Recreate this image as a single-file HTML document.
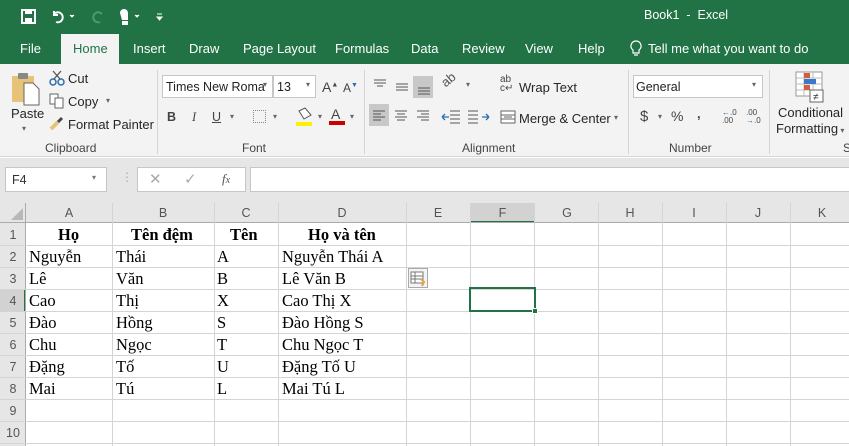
<!DOCTYPE html>
<html><head><meta charset="utf-8"><style>
*{margin:0;padding:0;box-sizing:border-box}
body{width:849px;height:446px;overflow:hidden;background:#fff;font-family:"Liberation Sans",sans-serif;position:relative}
.a{position:absolute;white-space:nowrap}
.ui{font-size:13px;color:#262626}
.tab{color:#fff;font-size:13px;top:41px}
.grp{font-size:12px;color:#444;top:141px}
.sep{position:absolute;width:1px;background:#d4d4d4;top:70px;height:84px}
.vl{position:absolute;top:203px;width:1px;height:243px;background:#d4d4d4}
.hl{position:absolute;left:0;width:849px;height:1px;background:#d4d4d4}
.ch{position:absolute;top:203px;height:20px;font-size:12.5px;color:#555;text-align:center;line-height:20px}
.rh{position:absolute;left:0;width:26px;font-size:12.5px;color:#555;text-align:center}
.c{position:absolute;font-family:"Liberation Serif",serif;font-size:16.5px;color:#000}
.b{font-weight:bold}
.box{position:absolute;background:#fff;border:1px solid #c6c6c6}
</style></head><body>
<div class="a" style="left:0;top:0;width:849px;height:64px;background:#217346"></div>
<svg class="a" style="left:20px;top:8px" width="150" height="20">
<rect x="2" y="2" width="13" height="13" fill="none" stroke="#fff" stroke-width="2"/><rect x="5" y="2" width="7" height="4" fill="#fff"/><rect x="5" y="10" width="7" height="5" fill="#fff"/>
<path d="M34 6 a5 5 0 1 1 2 8 M34 3 v4 h4" fill="none" stroke="#fff" stroke-width="2"/><path d="M50 7 l2 2 l2-2" fill="#fff" stroke="#fff"/>
<path d="M82 6 a5 5 0 1 0 -2 8" fill="none" stroke="#4f9a6c" stroke-width="2"/>
<path d="M100 5 a4 4 0 0 1 8 0 v7 h-6 z" fill="#fff"/><rect x="102" y="13" width="6" height="4" fill="#fff"/><path d="M115 7 l2 2 l2-2" fill="#fff" stroke="#fff"/>
<path d="M137 6 h5 M137 9 l2.5 3 l2.5-3z" fill="#fff" stroke="#fff"/>
</svg>
<div class="a" style="left:644px;top:8px;color:#fff;font-size:12.5px">Book1 &nbsp;-&nbsp; Excel</div>
<div class="a" style="left:61px;top:34px;width:58px;height:30px;background:#f3f3f3"></div>
<div class="a tab" style="left:20px">File</div>
<div class="a tab" style="left:73px;color:#217346">Home</div>
<div class="a tab" style="left:133px">Insert</div>
<div class="a tab" style="left:189px">Draw</div>
<div class="a tab" style="left:243px">Page Layout</div>
<div class="a tab" style="left:335px">Formulas</div>
<div class="a tab" style="left:411px">Data</div>
<div class="a tab" style="left:462px">Review</div>
<div class="a tab" style="left:525px">View</div>
<div class="a tab" style="left:578px">Help</div>
<svg class="a" style="left:629px;top:40px" width="14" height="17"><path d="M7 1 a5 5 0 0 1 3 9 v3 h-6 v-3 a5 5 0 0 1 3-9z M5 15 h4" fill="none" stroke="#fff" stroke-width="1.2"/></svg>
<div class="a tab" style="left:648px">Tell me what you want to do</div>
<div class="a" style="left:0;top:64px;width:849px;height:93px;background:#f3f3f3;border-bottom:1px solid #d5d5d5"></div>
<svg class="a" style="left:10px;top:72px" width="34" height="34"><rect x="2" y="4" width="22" height="26" fill="#e7c37a"/><rect x="8" y="1" width="10" height="6" rx="1" fill="#888"/><path d="M14 11 h9 l6 6 v16 h-15z" fill="#fff" stroke="#666"/></svg>
<div class="a ui" style="left:11px;top:106px">Paste</div>
<div class="a" style="left:22px;top:124px;font-size:8px;color:#666">▾</div>
<svg class="a" style="left:49px;top:70px" width="16" height="16"><circle cx="4" cy="12" r="3" fill="none" stroke="#2a6cb5" stroke-width="1.5"/><circle cx="12" cy="12" r="3" fill="none" stroke="#2a6cb5" stroke-width="1.5"/><path d="M5 9 L12 1 M11 9 L4 1" stroke="#555" stroke-width="1.3"/></svg>
<div class="a ui" style="left:68px;top:71px">Cut</div>
<svg class="a" style="left:49px;top:93px" width="16" height="16"><rect x="1" y="1" width="8" height="10" fill="#fff" stroke="#666"/><rect x="6" y="5" width="8" height="10" fill="#fff" stroke="#666"/></svg>
<div class="a ui" style="left:68px;top:94px">Copy</div><div class="a" style="left:106px;top:96px;font-size:8px;color:#666">▾</div>
<svg class="a" style="left:49px;top:115px" width="16" height="16"><path d="M2 14 l7-7" stroke="#e7c37a" stroke-width="4"/><path d="M9 7 l4-4" stroke="#444" stroke-width="3"/></svg>
<div class="a ui" style="left:68px;top:117px">Format Painter</div>
<div class="a grp" style="left:45px">Clipboard</div>
<div class="sep" style="left:157px"></div>
<div class="box" style="left:162px;top:75px;width:111px;height:23px"></div>
<div class="a" style="left:166px;top:80px;font-size:12.5px;color:#222">Times New Roma</div><div class="a" style="left:263px;top:80px;font-size:8px;color:#666">▾</div>
<div class="box" style="left:273px;top:75px;width:43px;height:23px"></div>
<div class="a" style="left:277px;top:80px;font-size:12.5px;color:#222">13</div><div class="a" style="left:306px;top:80px;font-size:8px;color:#666">▾</div>
<div class="a" style="left:322px;top:79px;font-size:14px;color:#444">A<sup style="font-size:7px">▲</sup></div>
<div class="a" style="left:343px;top:81px;font-size:12px;color:#444">A<sup style="font-size:7px;color:#2a6cb5">▼</sup></div>
<div class="a" style="left:167px;top:110px;font-size:12.5px;font-weight:bold;color:#444">B</div>
<div class="a" style="left:192px;top:110px;font-size:12.5px;font-style:italic;color:#444;font-family:'Liberation Serif',serif">I</div>
<div class="a" style="left:212px;top:110px;font-size:12.5px;text-decoration:underline;color:#444">U</div><div class="a" style="left:230px;top:112px;font-size:8px;color:#666">▾</div>
<div class="a" style="left:253px;top:110px;width:13px;height:13px;border:1px dotted #888"></div><div class="a" style="left:273px;top:112px;font-size:8px;color:#666">▾</div>
<svg class="a" style="left:295px;top:107px" width="20" height="20"><path d="M4 4 l6-3 l6 7 l-7 4z" fill="#fff" stroke="#555"/><rect x="1" y="15" width="16" height="4" fill="#ffef00"/></svg><div class="a" style="left:318px;top:112px;font-size:8px;color:#666">▾</div>
<div class="a" style="left:331px;top:106px;font-size:14px;color:#444">A</div><div class="a" style="left:329px;top:121px;width:16px;height:4px;background:#c00"></div><div class="a" style="left:350px;top:112px;font-size:8px;color:#666">▾</div>
<div class="a grp" style="left:242px">Font</div>
<div class="sep" style="left:364px"></div>
<svg class="a" style="left:368px;top:74px" width="65" height="52"><rect x="45" y="2" width="20" height="22" fill="#c8c8c8"/><rect x="1" y="30" width="20" height="22" fill="#c8c8c8"/><g stroke="#555" stroke-width="1"><path d="M6 6h12M6 9h12M9 12h6M28 10h12M28 13h12M28 16h12M50 14h12M50 17h12M50 20h12M5 37h12M5 40h8M5 43h12M5 46h8M27 37h12M29 40h8M27 43h12M29 46h8M49 37h12M53 40h8M49 43h12M53 46h8"/></g></svg>
<div class="a" style="left:441px;top:72px;font-size:13px;color:#555;transform:rotate(-40deg)">ab</div><div class="a" style="left:466px;top:80px;font-size:8px;color:#666">▾</div>
<svg class="a" style="left:440px;top:108px" width="50" height="16"><g stroke="#555"><path d="M10 3h10M10 7h10M10 11h10M10 15h10M28 3h10M28 7h10M28 11h10M28 15h10"/></g><path d="M2 9h7M2 9l3-3M2 9l3 3M42 9h7M49 9l-3-3M49 9l-3 3" stroke="#2a6cb5" stroke-width="1.3"/></svg>
<div class="a" style="left:500px;top:75px;font-size:10px;color:#444;line-height:9px">ab<br>c↵</div>
<div class="a ui" style="left:519px;top:80px">Wrap Text</div>
<svg class="a" style="left:500px;top:110px" width="16" height="14"><rect x="1" y="1" width="14" height="12" fill="#fff" stroke="#666"/><path d="M1 5h14M1 9h14M4 7h8" stroke="#666"/></svg>
<div class="a ui" style="left:519px;top:111px">Merge &amp; Center</div><div class="a" style="left:614px;top:113px;font-size:8px;color:#666">▾</div>
<div class="a grp" style="left:462px">Alignment</div>
<div class="sep" style="left:628px"></div>
<div class="box" style="left:633px;top:75px;width:130px;height:23px"></div>
<div class="a" style="left:636px;top:80px;font-size:12.5px;color:#222">General</div><div class="a" style="left:752px;top:80px;font-size:8px;color:#666">▾</div>
<div class="a" style="left:640px;top:108px;font-size:15px;color:#444">$</div><div class="a" style="left:658px;top:112px;font-size:8px;color:#666">▾</div>
<div class="a" style="left:671px;top:108px;font-size:14px;color:#444">%</div>
<div class="a" style="left:697px;top:106px;font-size:13px;color:#444;font-weight:bold">,</div>
<div class="a" style="left:722px;top:109px;font-size:8px;color:#444;line-height:8px"><span style="color:#2a6cb5">←</span>.0<br>.00</div>
<div class="a" style="left:746px;top:109px;font-size:8px;color:#444;line-height:8px">.00<br><span style="color:#2a6cb5">→</span>.0</div>
<div class="a grp" style="left:669px">Number</div>
<div class="sep" style="left:769px"></div>
<svg class="a" style="left:795px;top:71px" width="30" height="32"><rect x="1" y="1" width="26" height="24" fill="#fff" stroke="#999"/><path d="M1 7h26M1 13h26M1 19h26M9 1v24M18 1v24" stroke="#bbb"/><rect x="9" y="2" width="6" height="5" fill="#d0603a"/><rect x="9" y="8" width="12" height="5" fill="#3a78c9"/><rect x="9" y="14" width="6" height="5" fill="#d0603a"/><rect x="15" y="19" width="13" height="12" fill="#fff" stroke="#666"/><text x="18" y="29" font-size="10" fill="#333" font-family="Liberation Sans">≠</text></svg>
<div class="a ui" style="left:778px;top:105px">Conditional</div>
<div class="a ui" style="left:776px;top:121px">Formatting<span style="font-size:8px;color:#666"> ▾</span></div>
<div class="a grp" style="left:843px">S</div>
<div class="a" style="left:0;top:158px;width:849px;height:45px;background:#e6e6e6"></div>
<div class="box" style="left:5px;top:167px;width:102px;height:25px"></div>
<div class="a" style="left:12px;top:173px;font-size:12.5px;color:#333">F4</div><div class="a" style="left:92px;top:173px;font-size:8px;color:#777">▾</div>
<div class="a" style="left:121px;top:170px;font-size:12px;color:#aaa">⋮</div>
<div class="box" style="left:137px;top:167px;width:109px;height:25px"></div>
<div class="a" style="left:149px;top:170px;font-size:15px;color:#aaa">✕</div>
<div class="a" style="left:184px;top:170px;font-size:15px;color:#aaa">✓</div>
<div class="a" style="left:222px;top:171px;font-size:13px;color:#555;font-style:italic;font-family:'Liberation Serif',serif">f<span style="font-size:10px">x</span></div>
<div class="box" style="left:250px;top:167px;width:610px;height:25px"></div>
<div class="a" style="left:0;top:203px;width:849px;height:20px;background:#e6e6e6"></div>
<div class="a" style="left:0;top:223px;width:26px;height:223px;background:#e6e6e6"></div>
<div class="a" style="left:470px;top:203px;width:65px;height:20px;background:#d2d2d2;border-bottom:2px solid #217346"></div>
<div class="a" style="left:0;top:289px;width:26px;height:22px;background:#d2d2d2;border-right:2px solid #217346"></div>
<svg class="a" style="left:10px;top:207px" width="14" height="14"><path d="M13 1 V13 H1z" fill="#b8b8b8"/></svg>
<div class="hl" style="top:222px;background:#ababab"></div>
<div class="a" style="left:25px;top:203px;width:1px;height:243px;background:#ababab"></div>
<div class="vl" style="left:112px"></div><div class="vl" style="left:214px"></div><div class="vl" style="left:278px"></div><div class="vl" style="left:406px"></div><div class="vl" style="left:470px"></div><div class="vl" style="left:534px"></div><div class="vl" style="left:598px"></div><div class="vl" style="left:662px"></div><div class="vl" style="left:726px"></div><div class="vl" style="left:790px"></div>
<div class="hl" style="top:245px"></div><div class="hl" style="top:267px"></div><div class="hl" style="top:289px"></div><div class="hl" style="top:311px"></div><div class="hl" style="top:333px"></div><div class="hl" style="top:355px"></div><div class="hl" style="top:377px"></div><div class="hl" style="top:399px"></div><div class="hl" style="top:421px"></div><div class="hl" style="top:443px"></div>
<div class="ch" style="left:26px;width:86px">A</div><div class="ch" style="left:112px;width:102px">B</div><div class="ch" style="left:214px;width:64px">C</div><div class="ch" style="left:278px;width:128px">D</div><div class="ch" style="left:406px;width:64px">E</div><div class="ch" style="left:470px;width:65px">F</div><div class="ch" style="left:535px;width:64px">G</div><div class="ch" style="left:598px;width:64px">H</div><div class="ch" style="left:662px;width:64px">I</div><div class="ch" style="left:726px;width:64px">J</div><div class="ch" style="left:790px;width:64px">K</div>
<div class="rh" style="top:228px">1</div><div class="rh" style="top:250px">2</div><div class="rh" style="top:272px">3</div><div class="rh" style="top:294px">4</div><div class="rh" style="top:316px">5</div><div class="rh" style="top:338px">6</div><div class="rh" style="top:360px">7</div><div class="rh" style="top:382px">8</div><div class="rh" style="top:404px">9</div><div class="rh" style="top:426px">10</div>
<div class="c b" style="left:58px;top:225px">Họ</div><div class="c b" style="left:131px;top:225px">Tên đệm</div><div class="c b" style="left:230px;top:225px">Tên</div><div class="c b" style="left:308px;top:225px">Họ và tên</div>
<div class="c" style="left:29px;top:247px">Nguyễn</div><div class="c" style="left:116px;top:247px">Thái</div><div class="c" style="left:217px;top:247px">A</div><div class="c" style="left:282px;top:247px">Nguyễn Thái A</div>
<div class="c" style="left:29px;top:269px">Lê</div><div class="c" style="left:116px;top:269px">Văn</div><div class="c" style="left:217px;top:269px">B</div><div class="c" style="left:282px;top:269px">Lê Văn B</div>
<div class="c" style="left:29px;top:291px">Cao</div><div class="c" style="left:116px;top:291px">Thị</div><div class="c" style="left:217px;top:291px">X</div><div class="c" style="left:282px;top:291px">Cao Thị X</div>
<div class="c" style="left:29px;top:313px">Đào</div><div class="c" style="left:116px;top:313px">Hồng</div><div class="c" style="left:217px;top:313px">S</div><div class="c" style="left:282px;top:313px">Đào Hồng S</div>
<div class="c" style="left:29px;top:335px">Chu</div><div class="c" style="left:116px;top:335px">Ngọc</div><div class="c" style="left:217px;top:335px">T</div><div class="c" style="left:282px;top:335px">Chu Ngọc T</div>
<div class="c" style="left:29px;top:357px">Đặng</div><div class="c" style="left:116px;top:357px">Tố</div><div class="c" style="left:217px;top:357px">U</div><div class="c" style="left:282px;top:357px">Đặng Tố U</div>
<div class="c" style="left:29px;top:379px">Mai</div><div class="c" style="left:116px;top:379px">Tú</div><div class="c" style="left:217px;top:379px">L</div><div class="c" style="left:282px;top:379px">Mai Tú L</div>
<svg class="a" style="left:408px;top:268px" width="21" height="20"><rect x="0.5" y="0.5" width="19" height="19" fill="#f4f4f4" stroke="#aaa"/><rect x="3" y="4" width="12" height="11" fill="#fff" stroke="#777"/><path d="M3 8h12M3 11h12M7 4v11" stroke="#777"/><path d="M13 11 l3 3 l-2 4" stroke="#e8a33a" stroke-width="2" fill="none"/></svg>
<div class="a" style="left:469px;top:287px;width:67px;height:25px;border:2px solid #217346"></div>
<div class="a" style="left:532px;top:308px;width:6px;height:6px;background:#217346;border:1px solid #fff"></div>
</body></html>
